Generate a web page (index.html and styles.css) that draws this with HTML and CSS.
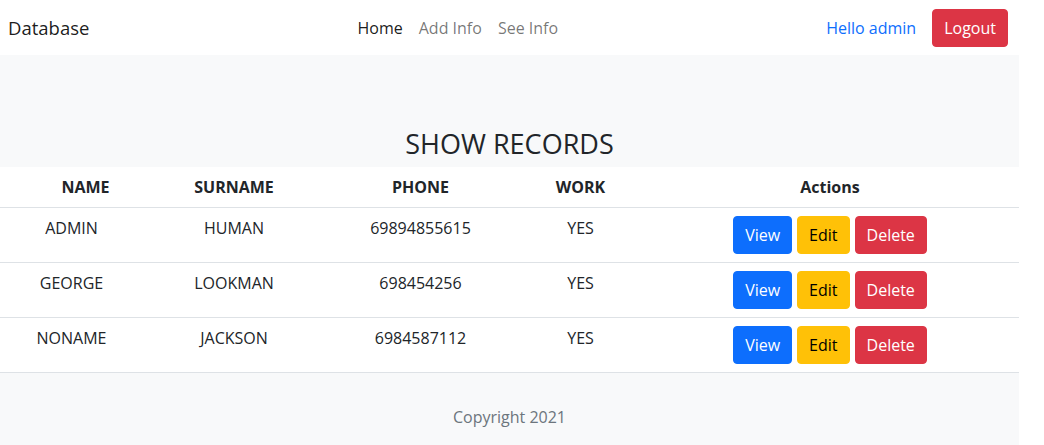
FILE: index.html
```html
<!DOCTYPE html>
<html lang="en">
<head>
<meta charset="utf-8">
<title>Database</title>
<link rel="stylesheet" href="styles.css">
</head>
<body>
<div class="page">
  <nav class="navbar">
    <a class="brand" href="#">Database</a>
    <ul class="nav-links">
      <li><a class="nav-link active" href="#">Home</a></li>
      <li><a class="nav-link" href="#">Add Info</a></li>
      <li><a class="nav-link" href="#">See Info</a></li>
    </ul>
    <div class="nav-right">
      <span class="hello">Hello admin</span>
      <a class="btn btn-danger btn-logout" href="#">Logout</a>
    </div>
  </nav>

  <section class="hero">
    <h3 class="title">SHOW RECORDS</h3>
  </section>

  <table class="records">
    <colgroup>
      <col class="c-name"><col class="c-surname"><col class="c-phone"><col class="c-work"><col class="c-actions">
    </colgroup>
    <thead>
      <tr>
        <th class="th-name">NAME</th>
        <th>SURNAME</th>
        <th>PHONE</th>
        <th>WORK</th>
        <th class="th-actions">Actions</th>
      </tr>
    </thead>
    <tbody>
      <tr>
        <td>ADMIN</td><td>HUMAN</td><td>69894855615</td><td>YES</td>
        <td class="td-actions"><div class="actions"><a class="btn btn-primary" href="#">View</a><a class="btn btn-warning" href="#">Edit</a><a class="btn btn-danger" href="#">Delete</a></div></td>
      </tr>
      <tr>
        <td>GEORGE</td><td>LOOKMAN</td><td>698454256</td><td>YES</td>
        <td class="td-actions"><div class="actions"><a class="btn btn-primary" href="#">View</a><a class="btn btn-warning" href="#">Edit</a><a class="btn btn-danger" href="#">Delete</a></div></td>
      </tr>
      <tr>
        <td>NONAME</td><td>JACKSON</td><td>6984587112</td><td>YES</td>
        <td class="td-actions"><div class="actions"><a class="btn btn-primary" href="#">View</a><a class="btn btn-warning" href="#">Edit</a><a class="btn btn-danger" href="#">Delete</a></div></td>
      </tr>
    </tbody>
  </table>

  <footer class="footer">Copyright 2021</footer>
</div>
</body>
</html>
```
FILE: styles.css
```css
* { box-sizing: border-box; }
html, body { margin: 0; padding: 0; background: #fff; }
body {
  font-family: "Open Sans", "Noto Sans", sans-serif;
  font-size: 16px;
  line-height: 1.5;
  color: #212529;
}
.page { width: 1019px; }

.navbar {
  height: 55px;
  display: flex;
  align-items: center;
  justify-content: space-between;
  padding: 0 11px 0 8px;
  background: #fff;
}
.brand {
  font-size: 18.5px;
  color: rgba(0,0,0,.9);
  text-decoration: none;
}
.nav-links {
  list-style: none;
  margin: 0;
  padding: 0;
  display: flex;
}
.nav-link {
  display: block;
  padding: 8px 8px;
  color: rgba(0,0,0,.55);
  text-decoration: none;
}
.nav-link.active { color: rgba(0,0,0,.9); }
.nav-right { display: flex; align-items: center; }
.hello { color: #0d6efd; margin-right: 16px; }

.btn {
  display: inline-block;
  padding: 6px 11px;
  font-size: 16px;
  line-height: 24px;
  border: 1px solid transparent;
  border-radius: 4px;
  text-decoration: none;
  text-align: center;
}
.btn-danger { background: #dc3545; border-color: #dc3545; color: #fff; }
.btn-primary { background: #0d6efd; border-color: #0d6efd; color: #fff; }
.btn-warning { background: #ffc107; border-color: #ffc107; color: #000; }

.hero {
  background: #f8f9fa;
  padding-top: 72px;
  text-align: center;
}
.title {
  margin: 0;
  padding-bottom: 7px;
  font-size: 27px;
  font-weight: 500;
  line-height: 33px;
}

.records {
  width: 1019px;
  border-collapse: collapse;
  table-layout: fixed;
}
.c-name { width: 143px; }
.c-surname { width: 182px; }
.c-phone { width: 191px; }
.c-work { width: 129px; }
.c-actions { width: 374px; }
.records th, .records td {
  padding: 8px;
  text-align: center;
  vertical-align: top;
  border-bottom: 1px solid #dee2e6;
}
.records th { font-weight: 700; }
.records th.th-name { padding-left: 36px; }
.records .th-actions { padding-right: 12px; }
.records .td-actions { padding-right: 12px; }
.actions {
  display: flex;
  justify-content: center;
  gap: 5px;
}

.footer {
  background: #f8f9fa;
  padding: 32px 0;
  text-align: center;
  color: #6c757d;
}
```
